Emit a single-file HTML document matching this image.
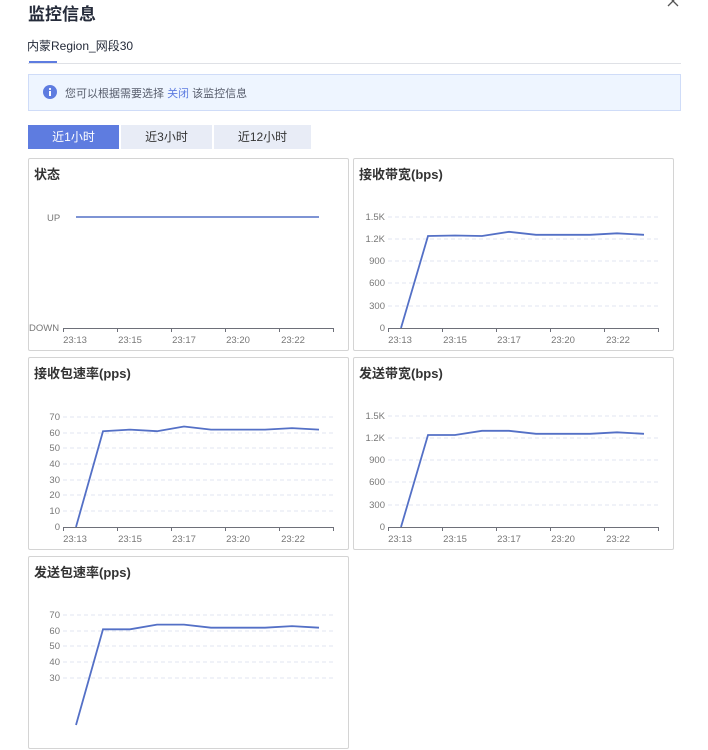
<!DOCTYPE html>
<html><head><meta charset="utf-8"><style>
body{margin:0;width:708px;height:683px;overflow:hidden;background:#fff;font-family:"Liberation Sans","Noto Sans CJK SC",sans-serif;position:relative}
.abs{position:absolute}
.panel{position:absolute;width:319px;height:191px;border:1px solid #d4d4d4;border-radius:2px;background:#fff}
.panel svg{position:absolute;left:0;top:0}
.t{font-size:12px;fill:#777}
.ttl{font-size:13px;font-weight:bold;fill:#333}
.btn{position:absolute;top:125px;height:24px;line-height:24px;text-align:center;font-size:12px;color:#333;background:#e8ecf6}
</style></head><body>
<div class="abs" style="left:28px;top:0px;font-size:17px;font-weight:bold;color:#252b3a">监控信息</div>
<svg class="abs" style="left:666px;top:0" width="14" height="8"><path d="M2 -5 L7 1 L12 -5 M7 1 L2 6 M7 1 L12 6" stroke="#555" stroke-width="1.3" fill="none"/></svg>
<div class="abs" style="left:27px;top:37px;font-size:12px;color:#252b3a">内蒙Region_网段30</div>
<div class="abs" style="left:28px;top:63px;width:653px;height:1px;background:#dfe1e6"></div>
<div class="abs" style="left:29px;top:61px;width:28px;height:2px;background:#5e7ce0"></div>
<div class="abs" style="left:28px;top:74px;width:651px;height:35px;border:1px solid #cfdcf8;background:#eef5ff"></div>
<svg class="abs" style="left:43px;top:85px" width="14" height="14"><circle cx="7" cy="7" r="7" fill="#5e7ce0"/><rect x="6" y="6" width="2" height="5" fill="#fff"/><circle cx="7" cy="4" r="1.1" fill="#fff"/></svg>
<div class="abs" style="left:65px;top:85px;font-size:11px;color:#575d6c">您可以根据需要选择 <span style="color:#5e7ce0">关闭</span> 该监控信息</div>
<div class="btn" style="left:28px;width:91px;background:#5e7ce0;color:#fff">近1小时</div>
<div class="btn" style="left:121px;width:91px">近3小时</div>
<div class="btn" style="left:214px;width:97px">近12小时</div>

<div class="panel" style="left:28px;top:158px"><svg width="321" height="193">
<text class="ttl" x="5" y="20">状态</text>
<text class="t" x="18" y="62" style="font-size:9.5px">UP</text>
<line x1="47" y1="58" x2="290" y2="58" stroke="#5470c6" stroke-width="1.5"/>
<text class="t" x="0" y="172" style="font-size:9.5px">DOWN</text>
<g stroke="#6e7079" stroke-width="1"><line x1="34" y1="169.5" x2="305" y2="169.5"/><line x1="34.5" y1="169" x2="34.5" y2="173"/><line x1="88.5" y1="169" x2="88.5" y2="173"/><line x1="142.5" y1="169" x2="142.5" y2="173"/><line x1="196.5" y1="169" x2="196.5" y2="173"/><line x1="250.5" y1="169" x2="250.5" y2="173"/><line x1="304.5" y1="169" x2="304.5" y2="173"/></g>
<g class="t" style="font-size:9.5px" text-anchor="middle"><text x="46" y="184">23:13</text><text x="101" y="184">23:15</text><text x="155" y="184">23:17</text><text x="209" y="184">23:20</text><text x="264" y="184">23:22</text></g>
</svg></div>

<div class="panel" style="left:353px;top:158px"><svg width="321" height="193">
<text class="ttl" x="5" y="20">接收带宽(bps)</text>
<g stroke="#e0e6f1" stroke-dasharray="4,3"><line x1="34" y1="58" x2="305" y2="58"/><line x1="34" y1="80" x2="305" y2="80"/><line x1="34" y1="102" x2="305" y2="102"/><line x1="34" y1="124" x2="305" y2="124"/><line x1="34" y1="147" x2="305" y2="147"/></g>
<g class="t" style="font-size:9.5px" text-anchor="end"><text x="31" y="61">1.5K</text><text x="31" y="83">1.2K</text><text x="31" y="105">900</text><text x="31" y="127">600</text><text x="31" y="150">300</text><text x="31" y="172">0</text></g>
<polyline fill="none" stroke="#5470c6" stroke-width="1.8" points="47,169 74,77 101,76.5 128,77 155,72.8 182,75.8 209,75.8 236,75.8 263,74.3 290,75.8"/>
<g stroke="#6e7079"><line x1="34" y1="169.5" x2="305" y2="169.5"/><line x1="34.5" y1="169" x2="34.5" y2="173"/><line x1="88.5" y1="169" x2="88.5" y2="173"/><line x1="142.5" y1="169" x2="142.5" y2="173"/><line x1="196.5" y1="169" x2="196.5" y2="173"/><line x1="250.5" y1="169" x2="250.5" y2="173"/><line x1="304.5" y1="169" x2="304.5" y2="173"/></g>
<g class="t" style="font-size:9.5px" text-anchor="middle"><text x="46" y="184">23:13</text><text x="101" y="184">23:15</text><text x="155" y="184">23:17</text><text x="209" y="184">23:20</text><text x="264" y="184">23:22</text></g>
</svg></div>

<div class="panel" style="left:28px;top:357px"><svg width="321" height="193">
<text class="ttl" x="5" y="20">接收包速率(pps)</text>
<g stroke="#e0e6f1" stroke-dasharray="4,3"><line x1="34" y1="59" x2="305" y2="59"/><line x1="34" y1="75" x2="305" y2="75"/><line x1="34" y1="90" x2="305" y2="90"/><line x1="34" y1="106" x2="305" y2="106"/><line x1="34" y1="122" x2="305" y2="122"/><line x1="34" y1="137" x2="305" y2="137"/><line x1="34" y1="153" x2="305" y2="153"/></g>
<g class="t" style="font-size:9.5px" text-anchor="end"><text x="31" y="62">70</text><text x="31" y="78">60</text><text x="31" y="93">50</text><text x="31" y="109">40</text><text x="31" y="125">30</text><text x="31" y="140">20</text><text x="31" y="156">10</text><text x="31" y="172">0</text></g>
<polyline fill="none" stroke="#5470c6" stroke-width="1.8" points="47,169 74,73.2 101,71.6 128,73.2 155,68.5 182,71.6 209,71.6 236,71.6 263,70.1 290,71.6"/>
<g stroke="#6e7079"><line x1="34" y1="169.5" x2="305" y2="169.5"/><line x1="34.5" y1="169" x2="34.5" y2="173"/><line x1="88.5" y1="169" x2="88.5" y2="173"/><line x1="142.5" y1="169" x2="142.5" y2="173"/><line x1="196.5" y1="169" x2="196.5" y2="173"/><line x1="250.5" y1="169" x2="250.5" y2="173"/><line x1="304.5" y1="169" x2="304.5" y2="173"/></g>
<g class="t" style="font-size:9.5px" text-anchor="middle"><text x="46" y="184">23:13</text><text x="101" y="184">23:15</text><text x="155" y="184">23:17</text><text x="209" y="184">23:20</text><text x="264" y="184">23:22</text></g>
</svg></div>

<div class="panel" style="left:353px;top:357px"><svg width="321" height="193">
<text class="ttl" x="5" y="20">发送带宽(bps)</text>
<g stroke="#e0e6f1" stroke-dasharray="4,3"><line x1="34" y1="58" x2="305" y2="58"/><line x1="34" y1="80" x2="305" y2="80"/><line x1="34" y1="102" x2="305" y2="102"/><line x1="34" y1="124" x2="305" y2="124"/><line x1="34" y1="147" x2="305" y2="147"/></g>
<g class="t" style="font-size:9.5px" text-anchor="end"><text x="31" y="61">1.5K</text><text x="31" y="83">1.2K</text><text x="31" y="105">900</text><text x="31" y="127">600</text><text x="31" y="150">300</text><text x="31" y="172">0</text></g>
<polyline fill="none" stroke="#5470c6" stroke-width="1.8" points="47,169 74,77 101,77 128,72.8 155,72.8 182,75.8 209,75.8 236,75.8 263,74.3 290,75.8"/>
<g stroke="#6e7079"><line x1="34" y1="169.5" x2="305" y2="169.5"/><line x1="34.5" y1="169" x2="34.5" y2="173"/><line x1="88.5" y1="169" x2="88.5" y2="173"/><line x1="142.5" y1="169" x2="142.5" y2="173"/><line x1="196.5" y1="169" x2="196.5" y2="173"/><line x1="250.5" y1="169" x2="250.5" y2="173"/><line x1="304.5" y1="169" x2="304.5" y2="173"/></g>
<g class="t" style="font-size:9.5px" text-anchor="middle"><text x="46" y="184">23:13</text><text x="101" y="184">23:15</text><text x="155" y="184">23:17</text><text x="209" y="184">23:20</text><text x="264" y="184">23:22</text></g>
</svg></div>

<div class="panel" style="left:28px;top:556px"><svg width="321" height="193">
<text class="ttl" x="5" y="20">发送包速率(pps)</text>
<g stroke="#e0e6f1" stroke-dasharray="4,3"><line x1="34" y1="58" x2="305" y2="58"/><line x1="34" y1="74" x2="305" y2="74"/><line x1="34" y1="89" x2="305" y2="89"/><line x1="34" y1="105" x2="305" y2="105"/><line x1="34" y1="121" x2="305" y2="121"/></g>
<g class="t" style="font-size:9.5px" text-anchor="end"><text x="31" y="61">70</text><text x="31" y="77">60</text><text x="31" y="92">50</text><text x="31" y="108">40</text><text x="31" y="124">30</text></g>
<polyline fill="none" stroke="#5470c6" stroke-width="1.8" points="47,168 74,72.3 101,72.3 128,67.6 155,67.6 182,70.7 209,70.7 236,70.7 263,69.1 290,70.7"/>
</svg></div>
</body></html>
